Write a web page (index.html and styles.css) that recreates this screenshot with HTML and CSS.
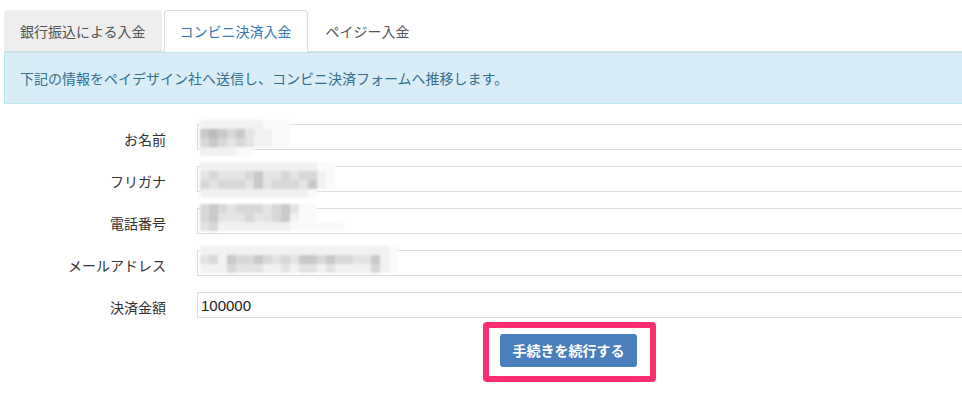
FILE: index.html
```html
<!DOCTYPE html>
<html lang="ja">
<head>
<meta charset="utf-8">
<title>コンビニ決済入金</title>
<link rel="stylesheet" href="styles.css">
</head>
<body>
<div class="page">
  <ul class="tabs">
    <li class="tab tab-muted">銀行振込による入金</li>
    <li class="tab tab-active">コンビニ決済入金</li>
    <li class="tab">ペイジー入金</li>
  </ul>
  <div class="alert">下記の情報をペイデザイン社へ送信し、コンビニ決済フォームへ推移します。</div>
  <div class="form">
    <div class="lbl">お名前</div>
    <div class="field">
      <div class="input"></div>
      <div class="mosaic">
        <div class="mrow"><span class="g1"></span><span class="g1"></span><span class="g1"></span><span class="g1"></span><span class="g1"></span><span class="g1"></span><span class="g1"></span><span class="g0"></span><span class="g0"></span><span class="g0"></span></div>
        <div class="mrow"><span class="g4"></span><span class="g5"></span><span class="g4"></span><span class="g3"></span><span class="g4"></span><span class="g2"></span><span class="g1"></span><span class="g1"></span><span class="g0"></span><span class="g0"></span></div>
        <div class="mrow"><span class="g3"></span><span class="g4"></span><span class="g3"></span><span class="g2"></span><span class="g3"></span><span class="g2"></span><span class="g1"></span><span class="g1"></span><span class="g0"></span><span class="g0"></span></div>
        <div class="mrow"><span class="g1"></span><span class="g1"></span><span class="g1"></span><span class="g1"></span><span class="g0"></span><span class="g0"></span></div>
      </div>
    </div>

    <div class="lbl">フリガナ</div>
    <div class="field">
      <div class="input"></div>
      <div class="mosaic">
        <div class="mrow"><span class="g1"></span><span class="g1"></span><span class="g1"></span><span class="g1"></span><span class="g1"></span><span class="g1"></span><span class="g1"></span><span class="g1"></span><span class="g1"></span><span class="g1"></span><span class="g1"></span><span class="g1"></span><span class="g1"></span><span class="g0"></span><span class="g0"></span></div>
        <div class="mrow"><span class="g2"></span><span class="g3"></span><span class="g2"></span><span class="g2"></span><span class="g2"></span><span class="g3"></span><span class="g4"></span><span class="g2"></span><span class="g2"></span><span class="g3"></span><span class="g2"></span><span class="g3"></span><span class="g3"></span><span class="g1"></span><span class="g0"></span></div>
        <div class="mrow"><span class="g3"></span><span class="g2"></span><span class="g3"></span><span class="g3"></span><span class="g3"></span><span class="g2"></span><span class="g4"></span><span class="g2"></span><span class="g3"></span><span class="g3"></span><span class="g3"></span><span class="g2"></span><span class="g4"></span><span class="g1"></span><span class="g0"></span></div>
        <div class="mrow"><span class="g1"></span><span class="g1"></span><span class="g1"></span><span class="g1"></span><span class="g1"></span><span class="g1"></span><span class="g1"></span><span class="g1"></span><span class="g1"></span><span class="g1"></span><span class="g1"></span><span class="g1"></span><span class="g0"></span></div>
      </div>
    </div>

    <div class="lbl">電話番号</div>
    <div class="field">
      <div class="input"></div>
      <div class="mosaic">
        <div class="mrow"><span class="g3"></span><span class="g4"></span><span class="g3"></span><span class="g2"></span><span class="g3"></span><span class="g3"></span><span class="g3"></span><span class="g2"></span><span class="g3"></span><span class="g4"></span><span class="g2"></span><span class="g0"></span><span class="g0"></span></div>
        <div class="mrow"><span class="g3"></span><span class="g4"></span><span class="g2"></span><span class="g2"></span><span class="g2"></span><span class="g3"></span><span class="g2"></span><span class="g2"></span><span class="g3"></span><span class="g4"></span><span class="g1"></span><span class="g0"></span><span class="g0"></span></div>
        <div class="mrow"><span class="g2"></span><span class="g3"></span><span class="g1"></span><span class="g1"></span><span class="g1"></span><span class="g1"></span><span class="g1"></span><span class="g1"></span><span class="g1"></span><span class="g1"></span><span class="g0"></span><span class="g0"></span><span class="g0"></span><span class="g0"></span><span class="g0"></span><span class="g0"></span></div>
      </div>
    </div>

    <div class="lbl">メールアドレス</div>
    <div class="field">
      <div class="input"></div>
      <div class="mosaic">
        <div class="mrow"><span class="g1"></span><span class="g1"></span><span class="g1"></span><span class="g1"></span><span class="g1"></span><span class="g1"></span><span class="g1"></span><span class="g1"></span><span class="g1"></span><span class="g1"></span><span class="g1"></span><span class="g1"></span><span class="g1"></span><span class="g1"></span><span class="g1"></span><span class="g1"></span><span class="g1"></span><span class="g1"></span><span class="g1"></span><span class="g1"></span><span class="g1"></span><span class="g0"></span></div>
        <div class="mrow"><span class="g2"></span><span class="g3"></span><span class="g1"></span><span class="g4"></span><span class="g3"></span><span class="g3"></span><span class="g4"></span><span class="g3"></span><span class="g2"></span><span class="g3"></span><span class="g2"></span><span class="g4"></span><span class="g4"></span><span class="g3"></span><span class="g4"></span><span class="g3"></span><span class="g3"></span><span class="g2"></span><span class="g2"></span><span class="g4"></span><span class="g1"></span><span class="g0"></span></div>
        <div class="mrow"><span class="g1"></span><span class="g1"></span><span class="g1"></span><span class="g3"></span><span class="g2"></span><span class="g2"></span><span class="g2"></span><span class="g1"></span><span class="g1"></span><span class="g2"></span><span class="g1"></span><span class="g2"></span><span class="g2"></span><span class="g1"></span><span class="g2"></span><span class="g1"></span><span class="g1"></span><span class="g1"></span><span class="g1"></span><span class="g3"></span><span class="g1"></span><span class="g0"></span></div>
      </div>
    </div>

    <div class="lbl">決済金額</div>
    <div class="field">
      <input class="input value" type="text" value="100000">
    </div>
  </div>
  <div class="actions">
    <div class="highlight">
      <button class="btn" type="button">手続きを続行する</button>
    </div>
  </div>
</div>
</body>
</html>
```

FILE: styles.css
```css
html, body {
  margin: 0;
  padding: 0;
  background: #fff;
  overflow: hidden;
}

body {
  font-family: "Noto Sans CJK JP", "Noto Sans", sans-serif;
  font-size: 14px;
  color: #333;
}

.page {
  width: 1000px;
  padding: 10px 0 0 4px;
}

.tabs {
  list-style: none;
  margin: 0;
  padding: 0;
  display: flex;
  border-bottom: 1px solid #ddd;
}

.tab {
  margin: 0 2px -1px 0;
  padding: 10px 15px;
  line-height: 20px;
  border: 1px solid transparent;
  border-radius: 4px 4px 0 0;
  color: #555;
  white-space: nowrap;
}

.tab-muted {
  background: #eee;
  border-color: #eee #eee #ddd;
}

.tab-active {
  background: #fff;
  color: #337ab7;
  border-color: #ddd #ddd transparent;
}

.alert {
  padding: 15px;
  line-height: 20px;
  border: 1px solid #bce8f1;
  background: #d9edf7;
  color: #31708f;
}

.form {
  display: grid;
  grid-template-columns: 162px 1fr;
  column-gap: 31px;
  row-gap: 16px;
  margin-top: 20px;
}

.lbl {
  text-align: right;
  line-height: 20px;
  padding-top: 5px;
  white-space: nowrap;
}

.field {
  position: relative;
  height: 26px;
}

.input {
  display: block;
  box-sizing: border-box;
  width: 100%;
  height: 26px;
  margin: 0;
  padding: 0 3px;
  border: 1px solid #ddd;
  background: #fff;
}

.value {
  font-family: "Liberation Sans", Arial, sans-serif;
  font-size: 15px;
  color: #222;
  outline: none;
}

.mosaic {
  position: absolute;
  left: 3px;
  top: -4px;
  display: flex;
  flex-direction: column;
  filter: blur(0.8px);
}

.mrow {
  display: flex;
}

.mrow span {
  width: 9px;
  height: 9px;
}

.g0 { background: #fafafa; }
.g1 { background: #f1f1f1; }
.g2 { background: #e4e4e4; }
.g3 { background: #d8d8d8; }
.g4 { background: #c9c9c9; }
.g5 { background: #bcbcbc; }

.actions {
  display: flex;
  margin-top: 4px;
  padding-left: 479px;
}

.highlight {
  border: 6px solid #fe2d6e;
  border-radius: 4px;
  padding: 6px 13px 9px 11px;
  background: #fff;
}

.btn {
  display: block;
  box-sizing: border-box;
  width: 137px;
  height: 33px;
  padding: 0;
  border: none;
  border-radius: 3px;
  background: #4a7fbd;
  color: #fff;
  font-family: "Noto Sans CJK JP", "Noto Sans", sans-serif;
  font-size: 14px;
  font-weight: bold;
  line-height: 33px;
}
```
